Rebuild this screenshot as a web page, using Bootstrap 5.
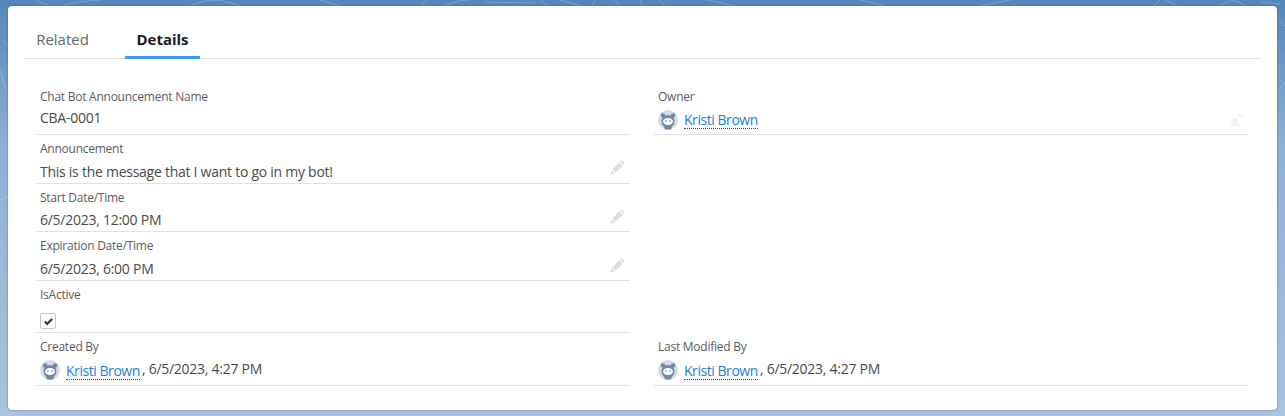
<!DOCTYPE html>
<html lang="en"><head><meta charset="utf-8"><title>Details</title>
<link rel="stylesheet" href="https://cdn.jsdelivr.net/npm/bootstrap@5.3.0/dist/css/bootstrap.min.css">
<style>
html,body{height:416px;overflow:hidden}
body{font-family:"Open Sans","Noto Sans",sans-serif;color:#444;padding:6px 8px;background:linear-gradient(180deg,#5586ba 0,#8eb0d6 35%,#a9c3e1 100%);position:relative}
.backlines{position:absolute;inset:0;width:1285px;height:416px;fill:none;stroke:rgba(255,255,255,.22);stroke-width:1}
.sheet{position:relative;background:#fff;border-radius:4px;height:404px;padding:0 16px;box-shadow:0 0 2px rgba(60,60,60,.7)}
.tabbar{height:53px;border-bottom:1px solid #e3e2e1}
.tabbar .tabx{height:53px;display:flex;align-items:center;justify-content:center;font-size:15px;padding-top:16px;padding-bottom:3px;color:#666;text-decoration:none;box-sizing:border-box}
.tabx.first{width:101px;padding-right:24px}
.tabbar .tabx.on{width:75px;font-weight:700;color:#1c1c1c;border-bottom:3px solid #3d99f5;margin-bottom:-1px;padding-bottom:0;height:53px}
.fields{display:grid;grid-template-columns:594px 594px;column-gap:24px;padding:0 12px}
.fld{border-bottom:1px solid #e3e2e1;padding:0 4px;display:flex;flex-direction:column;position:relative}
.r1{height:76px;padding-top:29px}.r2{height:49px;padding-top:5px}.r3{height:48px;padding-top:5px}.r4{height:49px;padding-top:5px}.r5{height:52px;padding-top:5px}.r6{height:53px;padding-top:5px}
.lbl{font-size:12px;line-height:18px;color:#5c5c5c;letter-spacing:-.25px}
.val{font-size:14px;line-height:20px;color:#4a4a4a;letter-spacing:-.26px;display:flex;align-items:center}
.r2 .val,.r4 .val{margin-top:4px}
.r3 .val{margin-top:3px}
.r1 .val{margin-top:2px}
.r1 .val.who{margin-top:4px}
.plink{color:#1b7fdc;border-bottom:1px dotted #0b5cab;line-height:17px;margin-left:6px;text-decoration:none;letter-spacing:-.45px}
.r6 .val{margin-top:3px;align-items:flex-start}
.r6 .plink{margin-top:3px}
.r6 .ava{margin-top:1px}
.ava{width:20px;height:20px;flex:none}
.pen{position:absolute;right:5px;bottom:7px;width:15px;height:15px;fill:#dedede}
.r2 .pen{bottom:8px}
.reassign{position:absolute;right:5px;bottom:7px;width:14px;height:14px;fill:#f1f1f1}
.ticksq{width:16px;height:16px;border:1px solid #c9c7c5;border-radius:2px;margin-top:9px;display:flex;align-items:center;justify-content:center}
.ticksq svg{width:9px;height:9px;fill:#3a3a3a}
.blank{height:0}
.tail{margin-left:2px}
</style></head><body>
<svg class="backlines" viewBox="0 0 1285 416"><path d="M35 0l15 6M62 6c10-4 25-5 40-6M190 6c15-7 30-8 50 0M320 0l20 6M425 0l-4 6M445 6c10-5 18-6 25-6M485 2l50 1M540 0l8 6M560 0c8 2 15 4 22 6M595 0l-3 6M615 0l5 6M640 0l3 6M660 0l5 6M705 0c15 2 20 4 30 6M860 0c10 2 15 4 25 6M1010 0l-30 6M1160 0l-6 6M1165 0l12 6M1220 6c8-7 16-7 26 0M1260 2l20 2M1278 20l7 6M1278 90l7-8M2 40l6 5M0 200l8-3M0 70l6 20"/></svg>
<svg width="0" height="0" class="d-block blank"><defs>
<symbol id="av" viewBox="0 0 20 20"><circle cx="10" cy="10" r="10" fill="#d5dbe3"/><circle cx="5" cy="5.500" r="2.200" fill="#6f88a8"/><circle cx="15" cy="5.500" r="2.200" fill="#6f88a8"/><path d="M3.500 11a6.500 6 0 0 1 13 0c0 3-1.500 4.500-2.500 5.500l-1 3H7l-1-3c-1-1-2.500-2.500-2.500-5.500z" fill="#6f88a8"/><ellipse cx="10" cy="11.500" rx="5" ry="3.500" fill="#fff"/><circle cx="8" cy="11" r=".7" fill="#3f5675"/><circle cx="12" cy="11" r=".7" fill="#3f5675"/></symbol>
<symbol id="pn" viewBox="0 0 16 16"><path d="M.5 15.500l1-4.500 3.500 3.500zM2.500 10L10 2.500 13.500 6 6 13.500zM11 1.500l.8-.8c.4-.4 1-.4 1.400 0l2.100 2.100c.4.4.4 1 0 1.400l-.8.800z"/></symbol>
</defs></svg>
<main class="sheet">
<nav class="tabbar d-flex"><a class="tabx first" href="#">Related</a><a class="tabx on" href="#">Details</a></nav>
<section class="fields">
<div class="fld r1"><span class="lbl">Chat Bot Announcement Name</span><div class="val">CBA-0001</div></div>
<div class="fld r1"><span class="lbl">Owner</span><div class="val who"><svg class="ava"><use href="#av"/></svg><a class="plink" href="#">Kristi Brown</a></div>
<svg class="reassign" viewBox="0 0 16 16"><circle cx="7" cy="8.500" r="3"/><path d="M1.500 15.500c0-3 2.500-4 5.500-4s5.500 1 5.500 4zM9.500 1.500l3-.8 2.500 3.300 .5-.4.500 3-2.800-.8.700-.6-1.500-2.100-2 .6z"/></svg></div>
<div class="fld r2"><span class="lbl">Announcement</span><div class="val">This is the message that I want to go in my bot!</div><svg class="pen"><use href="#pn"/></svg></div><div></div>
<div class="fld r3"><span class="lbl">Start Date/Time</span><div class="val">6/5/2023, 12:00 PM</div><svg class="pen"><use href="#pn"/></svg></div><div></div>
<div class="fld r4"><span class="lbl">Expiration Date/Time</span><div class="val">6/5/2023, 6:00 PM</div><svg class="pen"><use href="#pn"/></svg></div><div></div>
<div class="fld r5"><span class="lbl">IsActive</span><div class="ticksq"><svg viewBox="0 0 16 16"><path d="M0 9l2.500-2.500 3 3L13 2l3 3-10.500 10z"/></svg></div></div><div></div>
<div class="fld r6"><span class="lbl">Created By</span><div class="val"><svg class="ava"><use href="#av"/></svg><a class="plink" href="#">Kristi Brown</a><span class="tail">, 6/5/2023, 4:27 PM</span></div></div>
<div class="fld r6"><span class="lbl">Last Modified By</span><div class="val"><svg class="ava"><use href="#av"/></svg><a class="plink" href="#">Kristi Brown</a><span class="tail">, 6/5/2023, 4:27 PM</span></div></div>
</section>
</main>
<script src="https://cdn.jsdelivr.net/npm/bootstrap@5.3.0/dist/js/bootstrap.bundle.min.js"></script>
</body></html>
